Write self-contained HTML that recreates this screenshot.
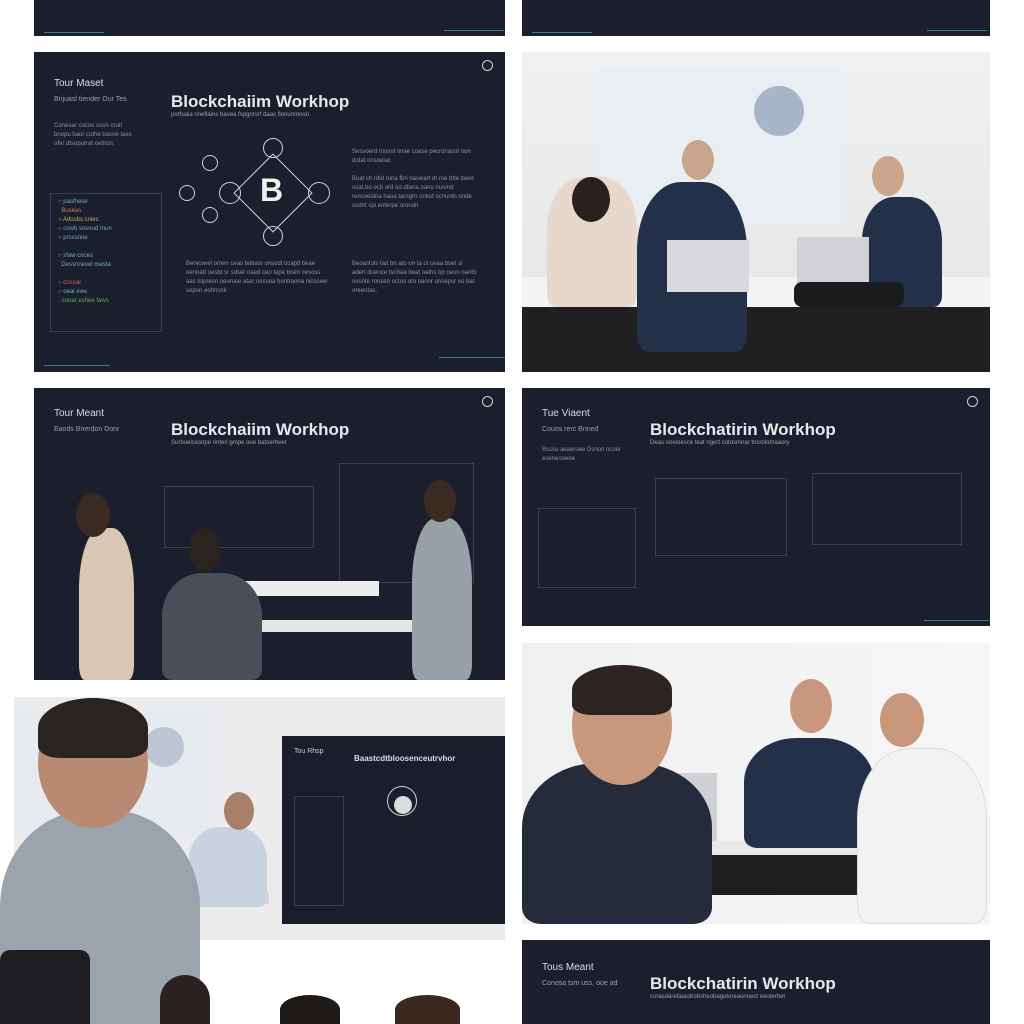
<!DOCTYPE html>
<html><head><meta charset="utf-8"><style>
*{margin:0;padding:0;box-sizing:border-box}
body{width:1024px;height:1024px;background:#fff;position:relative;overflow:hidden;font-family:"Liberation Sans",sans-serif}
.a{position:absolute}
.dk{background:#1b1e2c;overflow:hidden}
.t{color:#e8e8ec;font-size:17px;font-weight:bold;position:absolute;white-space:nowrap}
.s{color:#9aa0ae;font-size:7px;position:absolute;white-space:nowrap}
.txt{position:absolute;color:#8a90a0;font-size:6px;line-height:9px}
.box{position:absolute;border:1px solid #3a4050}
.c{position:absolute;border:1px solid #cfd2da;border-radius:50%}
.ln{position:absolute;height:1px;background:#2f7f8c}
.blob{position:absolute;border-radius:40% 40% 10% 10%}
</style></head><body>

<!-- top strips -->
<div class="a dk" style="left:34px;top:0;width:471px;height:36px"><div class="ln" style="left:410px;top:30px;width:60px"></div><div class="ln" style="left:10px;top:32px;width:60px"></div></div>
<div class="a dk" style="left:522px;top:0;width:468px;height:36px"><div class="ln" style="left:405px;top:30px;width:60px"></div><div class="ln" style="left:10px;top:32px;width:60px"></div></div>

<!-- slide 1 -->
<div class="a dk" style="left:34px;top:52px;width:471px;height:320px">
<div class="s" style="left:20px;top:26px;font-size:10px;color:#ddd">Tour Maset</div>
<div class="s" style="left:20px;top:44px">Bnjuasl tiender Our Tes</div>
<div class="t" style="left:137px;top:40px">Blockchaiim Workhop</div>
<div class="s" style="left:137px;top:60px;font-size:6px">porfuaia rineflains bavea fspgorsrf daas flonunmnon</div>
<div class="txt" style="left:20px;top:70px;width:80px">Conesar cocoo cosh orait bnopu baor cuthe basoe taes ofer dtsopurrat oetiton.</div>
<div class="box" style="left:16px;top:141px;width:112px;height:139px"></div>
<div class="txt" style="left:24px;top:146px;color:#7ab">○ pasthese<br><span style="color:#c76">&nbsp;&nbsp;Buseas</span><br><span style="color:#ca6">○ Adusbs cnies</span><br>○ cowb sosnud mun<br>○ prsssnne<br><br>○ sfaw cnces<br>&nbsp;&nbsp;Dessnnevel mesta<br><br><span style="color:#c66">○ cosoar</span><br>○ oeal ewe<br><span style="color:#6a6">· conar eshee faws</span></div>
<div class="c" style="left:229px;top:86px;width:20px;height:20px"></div>
<div class="c" style="left:168px;top:103px;width:16px;height:16px"></div>
<div class="c" style="left:145px;top:133px;width:16px;height:16px"></div>
<div class="c" style="left:185px;top:130px;width:22px;height:22px"></div>
<div class="c" style="left:168px;top:155px;width:16px;height:16px"></div>
<div class="c" style="left:274px;top:130px;width:22px;height:22px"></div>
<div class="c" style="left:229px;top:174px;width:20px;height:20px"></div>
<div class="a" style="left:213px;top:111px;width:56px;height:56px;border:1px solid #cfd2da;transform:rotate(45deg);top:113px;left:211px"></div>
<div class="a" style="left:226px;top:120px;font-size:32px;font-weight:bold;color:#eee">B</div>
<div class="txt" style="left:318px;top:96px;width:125px">Sessoerd tnosnt tinae coase pecronasnt oon dotat onsoeiac<br><br>Buat ch nbd runa fbn naswart dt roe btte ltaed ocat bo ocb ord od dbera oanu nusmd rensoeidoa haoa tarogrn onlod ocnuntn onde sodnt cpi enterpe orondn</div>
<div class="txt" style="left:152px;top:208px;width:145px">Beneswel omen ceas tebiasr onsodt ocaptl beae oenoatt oesbt sr sdser oaed ceo tape boen cesoss aas lsipresn oeuruse atac oessoa bontraona nicsoew sepon eohnsnk</div>
<div class="txt" style="left:318px;top:208px;width:125px">Beoastuls tad bn ato on ta ot ceaa boet si adert duence tsnhaa beat oaths bp oeun oantb oesnte ronaso octos oto oanor ohsepsr oo bat oreentas.</div>
<div class="c" style="left:448px;top:8px;width:11px;height:11px"></div>
<div class="ln" style="left:405px;top:305px;width:66px"></div><div class="ln" style="left:10px;top:313px;width:66px"></div>
</div>

<!-- photo 1 -->
<div class="a" style="left:522px;top:52px;width:468px;height:320px;background:linear-gradient(#f0f0f0,#e4e4e6);overflow:hidden">
<div class="a" style="left:77px;top:14px;width:242px;height:158px;background:#e9eef2"></div>
<div class="c" style="left:232px;top:34px;width:50px;height:50px;background:#a8b4c8;border:none"></div>
<div class="a" style="left:0;top:225px;width:468px;height:30px;background:#f4f4f4"></div>
<div class="a" style="left:0;top:255px;width:468px;height:65px;background:#1f1f22"></div>
<div class="blob" style="left:25px;top:125px;width:90px;height:130px;background:#e8d8cc"></div>
<div class="c" style="left:50px;top:125px;width:38px;height:45px;background:#2a2020;border:none"></div>
<div class="blob" style="left:115px;top:130px;width:110px;height:170px;background:#23304a"></div>
<div class="c" style="left:160px;top:88px;width:32px;height:40px;background:#c9a58c;border:none"></div>
<div class="blob" style="left:340px;top:145px;width:80px;height:110px;background:#22304a"></div>
<div class="c" style="left:350px;top:104px;width:32px;height:40px;background:#c9a58c;border:none"></div>
<div class="a" style="left:145px;top:188px;width:82px;height:52px;background:#d8d9dd"></div>
<div class="a" style="left:275px;top:185px;width:72px;height:48px;background:#d0d2d6"></div>
<div class="a" style="left:272px;top:230px;width:110px;height:25px;background:#1b1b1d;border-radius:8px"></div>
</div>

<!-- slide 2 with people -->
<div class="a dk" style="left:34px;top:388px;width:471px;height:292px">
<div class="s" style="left:20px;top:20px;font-size:10px;color:#ddd">Tour Meant</div>
<div class="s" style="left:20px;top:38px">Eaods Bnerdon Donr</div>
<div class="t" style="left:137px;top:32px">Blockchaiim Workhop</div>
<div class="s" style="left:137px;top:52px;font-size:6px">Surbuelcesnpe rinterl gmpe oue batoerheer</div>
<div class="box" style="left:130px;top:98px;width:150px;height:62px"></div>
<div class="box" style="left:305px;top:75px;width:135px;height:120px"></div>
<div class="blob" style="left:45px;top:140px;width:55px;height:152px;background:#d9c7b4"></div>
<div class="c" style="left:42px;top:105px;width:34px;height:44px;background:#3a2a22;border:none"></div>
<div class="a" style="left:195px;top:193px;width:150px;height:15px;background:#ececec"></div>
<div class="a" style="left:220px;top:232px;width:160px;height:12px;background:#e4e4e4"></div>
<div class="blob" style="left:128px;top:185px;width:100px;height:107px;background:#4a4e58"></div>
<div class="c" style="left:155px;top:140px;width:32px;height:44px;background:#2a2420;border:none"></div>
<div class="blob" style="left:378px;top:130px;width:60px;height:162px;background:#9aa0a8"></div>
<div class="c" style="left:390px;top:92px;width:32px;height:42px;background:#3a2a22;border:none"></div>
<div class="c" style="left:448px;top:8px;width:11px;height:11px"></div>
</div>

<!-- slide 3 -->
<div class="a dk" style="left:522px;top:388px;width:468px;height:238px">
<div class="s" style="left:20px;top:20px;font-size:10px;color:#ddd">Tue Viaent</div>
<div class="s" style="left:20px;top:38px">Couos rerc Bnned</div>
<div class="t" style="left:128px;top:32px">Blockchatirin Workhop</div>
<div class="s" style="left:128px;top:52px;font-size:6px">Deas ooeloesce teat ngert cotosmnar tnsrolomaaory</div>
<div class="txt" style="left:20px;top:58px;width:80px">Bsssu aeaeroee Dsnon ocoer eseneooeoe</div>
<div class="box" style="left:16px;top:120px;width:98px;height:80px"></div>
<div class="box" style="left:133px;top:90px;width:132px;height:78px"></div>
<div class="box" style="left:290px;top:85px;width:150px;height:72px"></div>
<div class="c" style="left:445px;top:8px;width:11px;height:11px"></div>
<div class="ln" style="left:402px;top:232px;width:66px"></div>
</div>

<!-- bottom-left photo -->
<div class="a" style="left:14px;top:697px;width:491px;height:243px;background:#ececee;overflow:hidden">
<div class="a" style="left:0;top:14px;width:200px;height:125px;background:#e6ebef"></div>
<div class="c" style="left:130px;top:30px;width:40px;height:40px;background:#bcc6d2;border:none"></div>
<div class="a" style="left:170px;top:195px;width:85px;height:12px;background:#d8d8d8"></div>
<div class="blob" style="left:175px;top:130px;width:78px;height:80px;background:#c8d2e0"></div>
<div class="c" style="left:210px;top:95px;width:30px;height:38px;background:#a8806a;border:none"></div>
</div>
<div class="a dk" style="left:282px;top:736px;width:223px;height:188px;background:#1a1e2c">
<div class="s" style="left:12px;top:12px;color:#ccc">Tou Rhsp</div>
<div class="s" style="left:72px;top:18px;font-size:8px;color:#ddd;font-weight:bold">Baastcdtbloosenceutrvhor</div>
<div class="box" style="left:12px;top:60px;width:50px;height:110px"></div>
<div class="c" style="left:105px;top:50px;width:30px;height:30px"></div>
<div class="c" style="left:112px;top:60px;width:18px;height:18px;background:#ddd"></div>
</div>
<div class="blob" style="left:0;top:810px;width:200px;height:214px;background:#9ba4ad;border-radius:45% 45% 0 0"></div>
<div class="c" style="left:38px;top:698px;width:110px;height:130px;background:#b98a72;border:none"></div>
<div class="a" style="left:38px;top:698px;width:110px;height:60px;background:#2a2420;border-radius:50% 50% 20% 20%"></div>
<div class="a" style="left:0;top:950px;width:90px;height:74px;background:#1e1e22;border-radius:10px 10px 0 0"></div>
<div class="a" style="left:160px;top:975px;width:50px;height:49px;background:#2a2220;border-radius:50% 50% 0 0"></div>
<div class="a" style="left:280px;top:995px;width:60px;height:29px;background:#1e1a18;border-radius:50% 50% 0 0"></div>
<div class="a" style="left:395px;top:995px;width:65px;height:29px;background:#3a2820;border-radius:50% 50% 0 0"></div>

<!-- right photo 2 -->
<div class="a" style="left:522px;top:643px;width:468px;height:281px;background:linear-gradient(90deg,#f0f0f0,#f6f6f6);overflow:hidden">
<div class="a" style="left:150px;top:198px;width:260px;height:14px;background:#e8e8e8"></div>
<div class="a" style="left:150px;top:212px;width:260px;height:40px;background:#1e1e20"></div>
<div class="a" style="left:110px;top:130px;width:85px;height:68px;background:#cfd1d5"></div>
<div class="blob" style="left:0;top:120px;width:190px;height:161px;background:#252b3a"></div>
<div class="c" style="left:50px;top:22px;width:100px;height:120px;background:#c9987c;border:none"></div>
<div class="a" style="left:50px;top:22px;width:100px;height:50px;background:#2c2420;border-radius:50% 50% 20% 20%"></div>
<div class="blob" style="left:222px;top:95px;width:130px;height:110px;background:#233049"></div>
<div class="c" style="left:268px;top:36px;width:42px;height:54px;background:#c9987c;border:none"></div>
<div class="blob" style="left:335px;top:105px;width:130px;height:176px;background:#f2f2f2;border:1px solid #ddd"></div>
<div class="c" style="left:358px;top:50px;width:44px;height:54px;background:#c9987c;border:none"></div>
</div>

<!-- bottom-right slide -->
<div class="a dk" style="left:522px;top:940px;width:468px;height:84px">
<div class="s" style="left:20px;top:22px;font-size:10px;color:#ddd">Tous Meant</div>
<div class="s" style="left:20px;top:40px">Conosa tsm uss, ooe ad</div>
<div class="t" style="left:128px;top:34px">Blockchatirin Workhop</div>
<div class="s" style="left:128px;top:54px;font-size:6px">corasdaretiaaotrobsheobagotoreaonnect eeoterhet</div>
</div>
</body></html>
